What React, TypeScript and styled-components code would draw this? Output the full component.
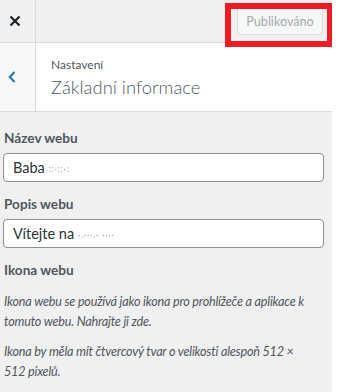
import { createGlobalStyle } from "styled-components";
import styled from "styled-components";

const GlobalStyle = createGlobalStyle`
  html, body {
    margin: 0;
    padding: 0;
    background: #fff;
  }
  body {
    font-family: Lato, "Open Sans", sans-serif;
  }
`;

const Panel = styled.div`
  width: 332px;
  height: 392px;
  background: #f0f0f1;
  display: flex;
  flex-direction: column;
  overflow: hidden;
`;

const Header = styled.header`
  position: relative;
  height: 42px;
  display: flex;
  align-items: center;
  border-bottom: 1px solid #dcdcde;
  background: #f0f0f1;
`;

const CloseButton = styled.button`
  width: 36px;
  height: 42px;
  padding: 0 0 0 9px;
  border: 0;
  border-right: 1px solid #dcdcde;
  background: transparent;
  display: flex;
  align-items: center;
  color: #1d2327;
`;

const Actions = styled.div`
  flex: 1;
  display: flex;
  justify-content: flex-end;
  padding-right: 9px;
`;

const PublishButton = styled.button`
  height: 28px;
  width: 86px;
  padding: 0;
  font-family: inherit;
  font-size: 12.6px;
  color: #a7aaad;
  background: #f6f7f7;
  border: 1px solid #dcdcde;
  border-radius: 3px;
`;

const Highlight = styled.div`
  position: absolute;
  left: 225px;
  top: 3px;
  width: 108px;
  height: 44px;
  box-sizing: border-box;
  border: 6px solid #ed1c24;
  pointer-events: none;
`;

const SectionHead = styled.div`
  height: 70px;
  display: flex;
  background: #fff;
  border-bottom: 1px solid #dcdcde;
`;

const BackButton = styled.button`
  width: 36px;
  padding: 0 0 0 8px;
  border: 0;
  border-right: 1px solid #dcdcde;
  background: #f6f7f7;
  display: flex;
  align-items: center;
  color: #2271b1;
`;

const Titles = styled.div`
  display: flex;
  flex-direction: column;
  justify-content: center;
  padding: 2px 0 0 15px;
  color: #50575e;
`;

const Crumb = styled.span`
  font-size: 12px;
  line-height: 18px;
`;

const Title = styled.h2`
  margin: 0;
  font-size: 18.4px;
  font-weight: 300;
  line-height: 27px;
`;

const Body = styled.div`
  flex: 1;
  padding: 16px 4px 0 3px;
`;

const Field = styled.div`
  margin-bottom: 12px;
`;

const Label = styled.div`
  font-size: 13.6px;
  font-weight: 700;
  line-height: 20px;
  color: #50575e;
  padding-left: 1px;
  margin-bottom: 5px;
`;

const TextBox = styled.div`
  height: 29px;
  width: 321px;
  box-sizing: border-box;
  display: flex;
  align-items: center;
  padding: 0 9px;
  background: #fff;
  border: 1px solid #8c8f94;
  border-radius: 4px;
  font-size: 14.5px;
  color: #2c3338;
  white-space: pre;
`;

const Redacted = styled.span`
  font-size: 10px;
  letter-spacing: 0.5px;
  color: #a6acc0;
  filter: blur(0.3px);
`;

const Description = styled.p`
  margin: 0 0 10px;
  padding-left: 1px;
  font-size: 12.6px;
  letter-spacing: -0.2px;
  line-height: 20px;
  font-style: italic;
  color: #50575e;
`;

export default function App() {
  return (
    <>
      <GlobalStyle />
      <Panel>
        <Header>
          <CloseButton aria-label="Zavřít">
            <svg width="12" height="12" viewBox="0 0 12 12">
              <path
                d="M1.5 1.5 L10.5 10.5 M10.5 1.5 L1.5 10.5"
                stroke="currentColor"
                strokeWidth="2.2"
                fill="none"
              />
            </svg>
          </CloseButton>
          <Actions>
            <PublishButton>Publikováno</PublishButton>
          </Actions>
          <Highlight />
        </Header>
        <SectionHead>
          <BackButton aria-label="Zpět">
            <svg width="8" height="12" viewBox="0 0 8 12">
              <path
                d="M6.5 1 L1.8 6 L6.5 11"
                stroke="currentColor"
                strokeWidth="2"
                fill="none"
              />
            </svg>
          </BackButton>
          <Titles>
            <Crumb>Nastavení</Crumb>
            <Title>Základní informace</Title>
          </Titles>
        </SectionHead>
        <Body>
          <Field>
            <Label>Název webu</Label>
            <TextBox>
              Baba <Redacted>::·::·:</Redacted>
            </TextBox>
          </Field>
          <Field>
            <Label>Popis webu</Label>
            <TextBox>
              Vítejte na <Redacted>·.···.· ····</Redacted>
            </TextBox>
          </Field>
          <Field>
            <Label>Ikona webu</Label>
          </Field>
          <Description>
            Ikona webu se používá jako ikona pro prohlížeče a aplikace k tomuto
            webu. Nahrajte ji zde.
          </Description>
          <Description>
            Ikona by měla mít čtvercový tvar o velikosti alespoň 512 ×
            512&nbsp;pixelů.
          </Description>
        </Body>
      </Panel>
    </>
  );
}
